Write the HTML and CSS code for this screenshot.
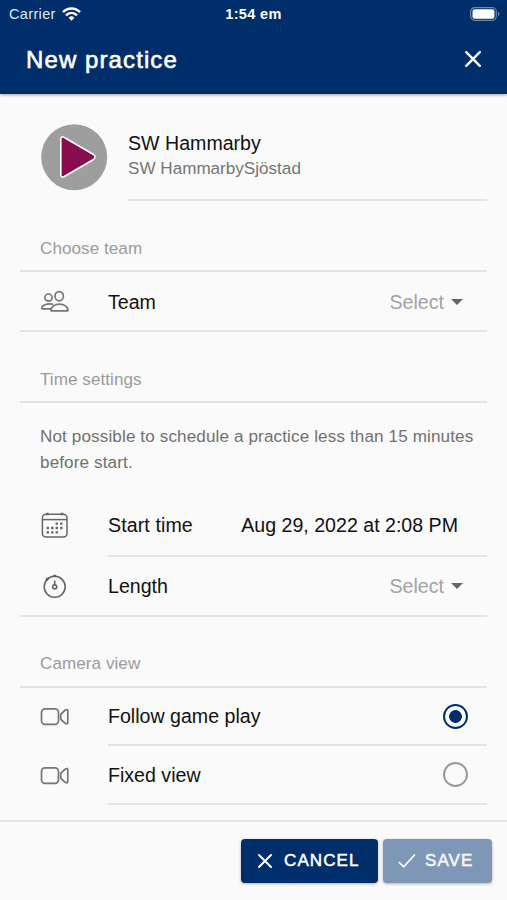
FILE: index.html
```html
<!DOCTYPE html>
<html lang="en">
<head>
<meta charset="utf-8">
<title>New practice</title>
<link rel="stylesheet" href="styles.css">
</head>
<body>
<header class="header">
  <div class="status">
    <span class="carrier">Carrier
      <svg class="wifi" width="19" height="14" viewBox="0 0 19 14" fill="none" stroke="#fff" stroke-width="2.5"><path d="M1 5.2C6 .3 13 .3 18 5.2M4 8.3c3.300-3.200 7.700-3.200 11 0"/><path d="M6.600 10.700a4.200 4.200 0 0 1 5.800 0L9.500 13.700z" fill="#fff" stroke="none"/></svg>
    </span>
    <span class="clock">1:54 em</span>
    <svg class="battery" width="30" height="14" viewBox="0 0 30 14"><rect x=".7" y=".7" width="25.600" height="12.600" rx="4" fill="none" stroke="#7189b0" stroke-width="1.200"/><rect x="2.500" y="2.300" width="22" height="9.400" rx="2.200" fill="#fff"/><path d="M28 4.800q3 2.200 0 4.400z" fill="#7189b0"/></svg>
  </div>
  <div class="titlebar">
    <h1 class="title">New practice</h1>
    <svg class="close" width="18" height="18" viewBox="0 0 18 18" stroke="#fff" stroke-width="2.400" stroke-linecap="round"><path d="M2.200 2.200l13.600 13.600M15.800 2.200L2.200 15.800"/></svg>
  </div>
</header>
<main class="content">
  <section class="profile">
    <svg class="avatar" width="67" height="67" viewBox="0 0 67 67"><circle cx="33.200" cy="33.200" r="33" fill="#9e9e9e"/><path d="M19.800 15.500v35q0 3.800 3.500 2L52.500 35.500q3-2.500 0-5L23.300 13.500q-3.500-2-3.500 2z" fill="#870d50" stroke="#fff" stroke-width="1.600" stroke-linejoin="round"/></svg>
    <div class="club">
      <div class="name">SW Hammarby</div>
      <div class="sub">SW HammarbySjöstad</div>
    </div>
  </section>
  <h2 class="label label-first">Choose team</h2>
  <div class="row row-full row-team">
    <svg class="icon" width="30" height="24" viewBox="0 0 30 24" fill="none" stroke="#757575" stroke-width="1.700" stroke-linejoin="round"><circle cx="8.500" cy="7.600" r="3.600"/><ellipse cx="19.200" cy="6.200" rx="4.200" ry="4.600"/><path d="M11 20.400c0-3.900 4-6.200 8.500-6.200s8.400 2.300 8.400 6.200q0 .5-.8.500H11.800q-.8 0-.8-.5zM13.300 14.400C7.800 13 2 14.800 1.700 18q0 .9.900.9h8.900"/></svg>
    <div class="cell"><span>Team</span><span class="select">Select<i class="caret"></i></span></div>
  </div>
  <h2 class="label label-time">Time settings</h2>
  <p class="note">Not possible to schedule a practice less than 15 minutes before start.</p>
  <div class="row row-start">
    <svg class="icon" width="30" height="28" viewBox="0 0 30 28" fill="none" stroke="#666" stroke-width="1.500"><rect x="2.400" y="3.300" width="24.600" height="22.800" rx="3.500"/><path d="M2.400 8.600H27"/><path d="M7.400 1.700v2.600M22 1.700v2.600" stroke-width="2.600"/><path d="M15.600 12.600h8M6.600 17h17M6.600 21.400h12.500" stroke-width="2.400" stroke-dasharray="2.400 2.100"/></svg>
    <div class="cell"><span>Start time</span><span class="date">Aug 29, 2022 at 2:08 PM</span></div>
  </div>
  <div class="row row-full row-length">
    <svg class="icon" width="30" height="28" viewBox="0 0 30 28" fill="none" stroke="#666" stroke-width="1.600"><circle cx="14.700" cy="14.800" r="10.500"/><circle cx="14.700" cy="14.800" r="2.100"/><path d="M14.700 8.500v5.600"/><path d="M12.900 4.300h3.600L14.700 3zM6.200 6.300h2.600L6.800 8.600z" fill="#555" stroke="#555" stroke-width="1"/></svg>
    <div class="cell"><span>Length</span><span class="select">Select<i class="caret"></i></span></div>
  </div>
  <h2 class="label label-camera">Camera view</h2>
  <div class="row row-follow">
    <svg class="icon" width="30" height="20" viewBox="0 0 30 20" fill="none" stroke="#757575" stroke-width="1.700" stroke-linejoin="round"><rect x="1.500" y="1.900" width="17" height="15.400" rx="3.500"/><path d="M20.700 8.200q0-1 .8-1.700l3.700-3.400q2.600-1.400 2.600 1v11.200q0 2.400-2.600 1l-3.700-3.300q-.8-.7-.8-1.700z"/></svg>
    <div class="cell"><span>Follow game play</span><span class="radio radio-on"></span></div>
  </div>
  <div class="row row-fixed">
    <svg class="icon" width="30" height="20" viewBox="0 0 30 20" fill="none" stroke="#757575" stroke-width="1.700" stroke-linejoin="round"><rect x="1.500" y="1.900" width="17" height="15.400" rx="3.500"/><path d="M20.700 8.200q0-1 .8-1.700l3.700-3.400q2.600-1.400 2.600 1v11.200q0 2.400-2.600 1l-3.700-3.300q-.8-.7-.8-1.700z"/></svg>
    <div class="cell"><span>Fixed view</span><span class="radio"></span></div>
  </div>
</main>
<footer class="footer">
  <button class="btn btn-cancel"><svg width="16" height="16" viewBox="0 0 16 16" stroke="#fff" stroke-width="2" stroke-linecap="round"><path d="M2 2l12 12M14 2L2 14"/></svg>CANCEL</button>
  <button class="btn btn-save"><svg width="18" height="16" viewBox="0 0 18 16" fill="none" stroke="#fff" stroke-width="1.600" stroke-linecap="round"><path d="M1.300 9.500l4.400 4.300L16.700 1.800"/></svg>SAVE</button>
</footer>
</body>
</html>
```
FILE: styles.css
```css
* { box-sizing: border-box; }
body {
  margin: 0;
  width: 507px;
  height: 900px;
  overflow: hidden;
  display: flex;
  flex-direction: column;
  background: #fafafa;
  color: #111;
  font: 19.6px/24px "Liberation Sans", Arial, sans-serif;
}
svg { display: block; flex: none; }
.header {
  height: 94px;
  flex: none;
  background: #002e6a;
  color: #fff;
  box-shadow: 0 1px 3px rgba(0, 0, 0, .35);
}
.status {
  height: 28px;
  padding: 0 7px 0 9px;
  display: grid;
  grid-template-columns: 1fr auto 1fr;
  align-items: center;
  font-size: 15px;
}
.carrier { display: flex; align-items: center; gap: 6px; font-size: 14.5px; letter-spacing: .35px; color: #dfe6f0; }
.clock { margin-right: 2px; font-size: 14.5px; font-weight: bold; letter-spacing: .35px; }
.battery { justify-self: end; }
.titlebar {
  height: 64px;
  padding: 0 25px 0 26px;
  display: flex;
  align-items: center;
  justify-content: space-between;
}
.title {
  margin: 0;
  font-size: 24px;
  font-weight: normal;
  letter-spacing: 1.1px;
  -webkit-text-stroke: .6px #fff;
}
.close { margin-bottom: 2px; }
.content { flex: 1; padding: 0 20px; }
.profile { height: 107px; display: flex; padding-left: 21px; }
.avatar { margin-top: 30px; }
.club {
  flex: 1;
  margin-left: 20px;
  padding-top: 37px;
  border-bottom: 2px solid #e3e3e3;
}
.sub { color: #757575; font-size: 17.1px; line-height: 28px; }
.label {
  margin: 0;
  padding-left: 20px;
  border-bottom: 2px solid #e3e3e3;
  color: #9b9b9b;
  font-size: 17.1px;
  font-weight: normal;
  letter-spacing: .05px;
}
.label-first { height: 71px; padding-top: 36px; }
.label-time { height: 71px; padding-top: 36px; }
.label-camera { height: 71px; padding-top: 35px; }
.note {
  margin: 0;
  height: 93px;
  padding: 21px 0 0 20px;
  color: #707070;
  font-size: 17.1px;
  line-height: 25.500px;
  letter-spacing: .12px;
}
.row { display: flex; align-items: center; padding-left: 20px; }
.row-full { border-bottom: 2px solid #e3e3e3; }
.icon { width: 30px; }
.cell {
  flex: 1;
  align-self: stretch;
  margin-left: 38px;
  padding-right: 19px;
  display: flex;
  align-items: center;
  justify-content: space-between;
  border-bottom: 2px solid #e3e3e3;
}
.row-full .cell { border-bottom: 0; }
.row-team { height: 60px; padding-top: 2px; }
.row-start { height: 61px; }
.row-start .cell { padding: 0 29px 2px 0; letter-spacing: .1px; }
.row-start .date { letter-spacing: 0; }
.row-start .icon { margin-bottom: 3px; }
.row-length { height: 60px; }
.row-follow { height: 58px; }
.row-fixed { height: 59px; }
.select { display: flex; align-items: center; gap: 7px; padding-right: 5px; color: #a3a3a3; }
.caret {
  border: 6px solid transparent;
  border-top-color: #666;
  border-bottom: 0;
}
.radio {
  width: 25px;
  height: 25px;
  border: 2.500px solid #999;
  border-radius: 50%;
}
.radio-on { border-color: #002e6a; background: radial-gradient(circle, #002e6a 6px, transparent 6.700px); }
.footer {
  flex: none;
  height: 80px;
  padding: 17px 15px 0;
  display: flex;
  justify-content: flex-end;
  gap: 5px;
  border-top: 2px solid #e5e5e5;
}
.btn {
  height: 44px;
  display: flex;
  align-items: center;
  border: 0;
  border-radius: 4px;
  color: #fff;
  font: 17px "Liberation Sans", Arial, sans-serif;
  letter-spacing: 1.100px;
  -webkit-text-stroke: .5px #fff;
  box-shadow: 0 1px 3px rgba(0, 0, 0, .3);
}
.btn-cancel { width: 137px; padding: 0 0 0 16px; gap: 11px; background: #002e6a; }
.btn-save { width: 109px; padding: 0 0 0 15px; gap: 9px; background: #7f97b6; color: #eef2f7; }
```
